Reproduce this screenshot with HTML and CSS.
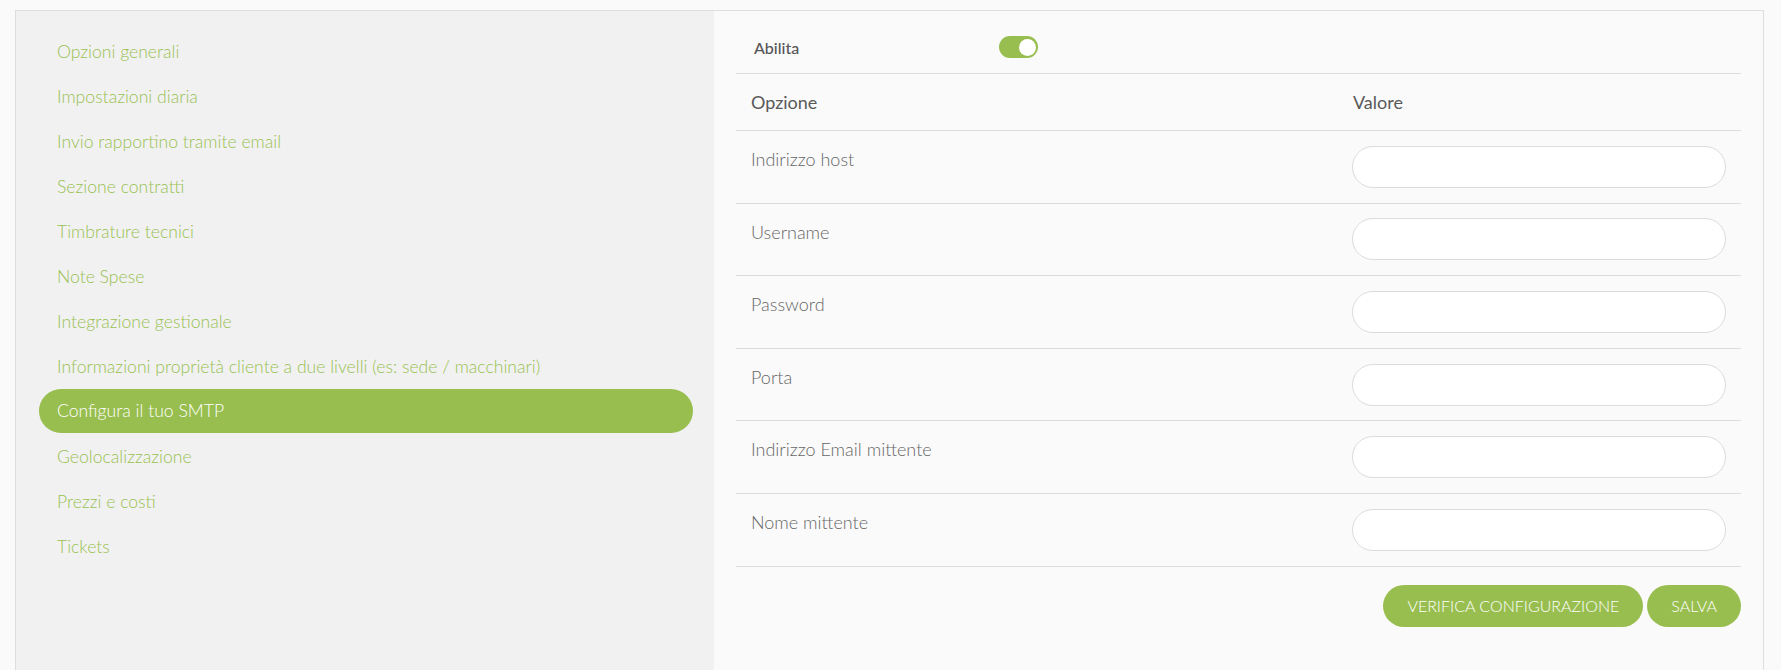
FILE: index.html
```html
<!DOCTYPE html>
<html lang="it">
<head>
<meta charset="utf-8">
<title>Configura il tuo SMTP</title>
<link rel="stylesheet" href="styles.css">
</head>
<body>
<div class="wrap">
  <nav class="sidebar">
    <a class="nav-item">Opzioni generali</a>
    <a class="nav-item">Impostazioni diaria</a>
    <a class="nav-item">Invio rapportino tramite email</a>
    <a class="nav-item">Sezione contratti</a>
    <a class="nav-item">Timbrature tecnici</a>
    <a class="nav-item">Note Spese</a>
    <a class="nav-item">Integrazione gestionale</a>
    <a class="nav-item">Informazioni proprietà cliente a due livelli (es: sede / macchinari)</a>
    <a class="nav-item active">Configura il tuo SMTP</a>
    <a class="nav-item">Geolocalizzazione</a>
    <a class="nav-item">Prezzi e costi</a>
    <a class="nav-item">Tickets</a>
  </nav>
  <main class="panel">
    <div class="enable-row">
      <span class="enable-label">Abilita</span>
      <span class="toggle"><span class="knob"></span></span>
    </div>
    <div class="table">
      <div class="row head">
        <div class="c1">Opzione</div>
        <div class="c2">Valore</div>
      </div>
      <div class="row">
        <div class="c1 label">Indirizzo host</div>
        <div class="c2"><input class="field" type="text"></div>
      </div>
      <div class="row">
        <div class="c1 label">Username</div>
        <div class="c2"><input class="field" type="text"></div>
      </div>
      <div class="row">
        <div class="c1 label">Password</div>
        <div class="c2"><input class="field" type="password"></div>
      </div>
      <div class="row">
        <div class="c1 label">Porta</div>
        <div class="c2"><input class="field" type="text"></div>
      </div>
      <div class="row">
        <div class="c1 label">Indirizzo Email mittente</div>
        <div class="c2"><input class="field" type="text"></div>
      </div>
      <div class="row">
        <div class="c1 label">Nome mittente</div>
        <div class="c2"><input class="field" type="text"></div>
      </div>
    </div>
    <div class="actions">
      <button class="btn">VERIFICA CONFIGURAZIONE</button>
      <button class="btn">SALVA</button>
    </div>
  </main>
</div>
</body>
</html>
```
FILE: styles.css
```css
* { box-sizing: border-box; }
html, body { margin: 0; padding: 0; }
body {
  background: #fafafa;
  font-family: Lato, "Open Sans", sans-serif;
  height: 670px;
  overflow: hidden;
}
.wrap {
  margin: 10px 17px 0 15px;
  border: 1px solid #dedede;
  border-bottom: none;
  display: flex;
  min-height: 700px;
}
.sidebar {
  width: 698px;
  flex: 0 0 698px;
  background: #f1f1f1;
  padding: 18px 21px 0 23px;
  display: flex;
  flex-direction: column;
}
.nav-item {
  display: block;
  height: 45px;
  line-height: 45px;
  padding-left: 18px;
  font-size: 17.6px;
  font-weight: 300;
  color: #99c152;
  border-radius: 23px;
  white-space: nowrap;
}
.nav-item.active {
  background: #98be4f;
  color: #fff;
  height: 44px;
  line-height: 44px;
  margin-bottom: 1px;
}
.panel {
  flex: 1;
  background: #fafafa;
  padding: 0 22px 0 22px;
}
.enable-row {
  display: flex;
  align-items: center;
  padding: 25px 0 15px 18px;
  border-bottom: 1px solid #dcdcdc;
}
.enable-label {
  width: 245px;
  font-size: 16px;
  font-weight: 500;
  color: #555;
}
.toggle {
  width: 39px;
  height: 22px;
  border-radius: 11px;
  background: #98be4f;
  display: flex;
  align-items: center;
  justify-content: flex-end;
  padding: 0 2px;
}
.knob {
  width: 17px;
  height: 17px;
  border-radius: 50%;
  background: #fff;
}
.row {
  display: flex;
  border-bottom: 1px solid #dcdcdc;
  height: 72.6px;
}
.row.head {
  height: 57px;
  align-items: center;
  font-size: 18px;
  font-weight: 400;
  color: #595959;
}
.c1 {
  flex: 0 0 601px;
  padding-left: 15px;
}
.c2 {
  flex: 1;
  padding: 0 15px 0 15px;
}
.row.head .c2 { padding-left: 16px; }
.row:not(.head) .c2 {
  display: flex;
  align-items: center;
}
.label {
  padding-top: 15px;
  font-size: 18px;
  line-height: 26px;
  font-weight: 300;
  color: #666;
}
.field {
  width: 100%;
  height: 42px;
  border: 1px solid #dcdcdc;
  border-radius: 21px;
  background: #fff;
  outline: none;
  padding: 0 16px;
  font-family: inherit;
  font-size: 15px;
}
.actions {
  display: flex;
  justify-content: flex-end;
  gap: 4px;
  padding-top: 18px;
}
.btn {
  height: 42px;
  border: none;
  border-radius: 21px;
  background: #98be4f;
  color: #fff;
  font-family: Lato, sans-serif;
  font-size: 16px;
  font-weight: 300;
  padding: 0 24px;
  cursor: pointer;
}
```
